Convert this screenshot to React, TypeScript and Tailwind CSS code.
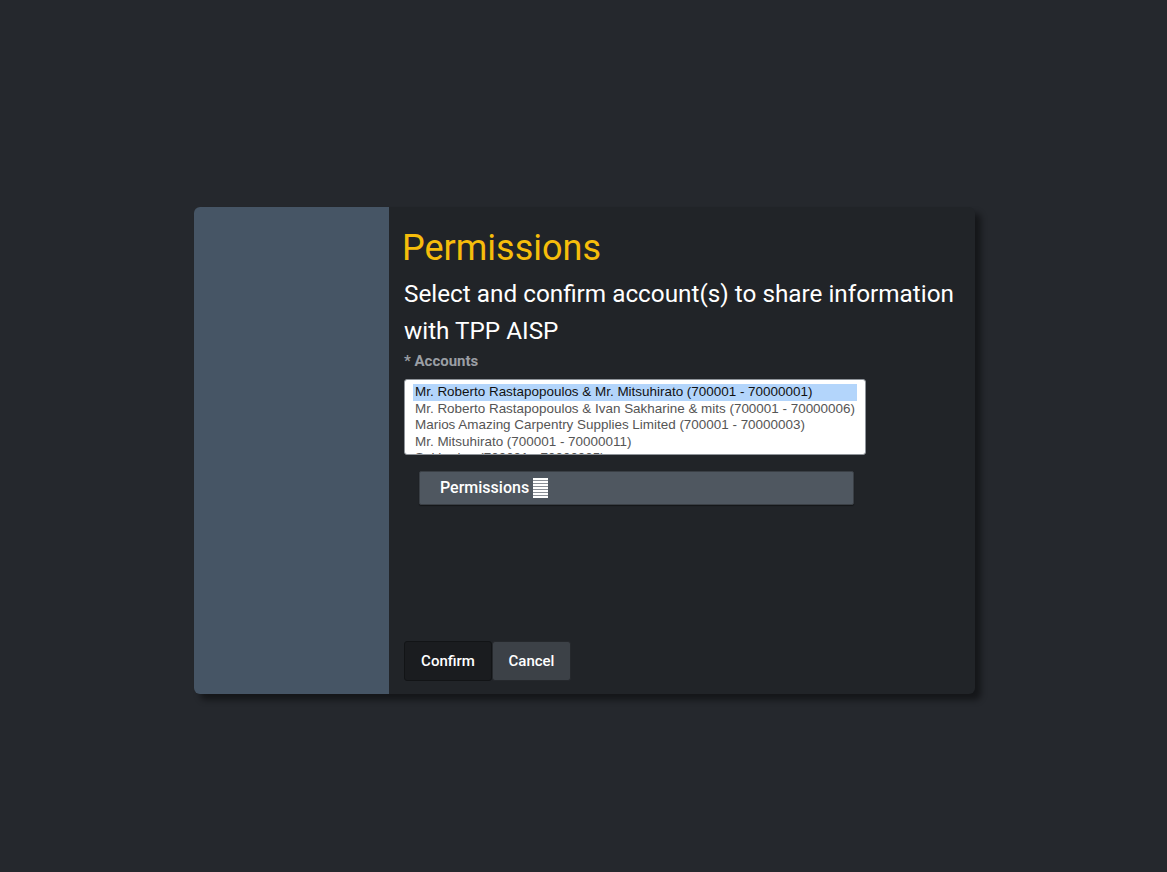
const ACCOUNTS = [
  "Mr. Roberto Rastapopoulos & Mr. Mitsuhirato (700001 - 70000001)",
  "Mr. Roberto Rastapopoulos & Ivan Sakharine & mits (700001 - 70000006)",
  "Marios Amazing Carpentry Supplies Limited (700001 - 70000003)",
  "Mr. Mitsuhirato (700001 - 70000011)",
  "Sakharine (700001 - 70000005)",
];

function ListIcon() {
  return (
    <svg width="15" height="20" viewBox="0 0 15 20" className="ml-[4px] inline-block">
      <rect x="0" y="0" width="15" height="20" fill="#ffffff" />
      {[2, 5, 8, 11, 14, 17].map((y) => (
        <rect key={y} x="0" y={y} width="15" height="1" fill="#8a8f96" />
      ))}
    </svg>
  );
}

export default function App() {
  return (
    <div className="flex min-h-screen justify-center bg-[#25282d] pl-[2px] pt-[207px] font-['Roboto',sans-serif]">
      <div className="flex h-[487px] w-[781px] overflow-hidden rounded-[6px] bg-[#212428] shadow-[6px_6px_6px_rgba(0,0,0,0.45)]">
        <div className="w-[195px] shrink-0 bg-[#465565]" />
        <div className="flex flex-1 flex-col px-[15px] pb-[13px] pt-[19px]">
          <h1 className="ml-[-2px] text-[36px] leading-[44px] text-[#f6bd0b]">Permissions</h1>
          <h2 className="mt-[5px] text-[24.3px] leading-[37px] text-white">
            Select and confirm account(s) to share information with TPP AISP
          </h2>
          <div className="mt-[3px] text-[15px] font-bold leading-[18px] text-[#9a9ea4]">* Accounts</div>
          <div className="mt-[9px] h-[76px] w-[462px] overflow-hidden rounded-[3px] border border-[#8f949a] bg-white py-[4px] pl-[8px] pr-[8px] font-['Liberation_Sans',sans-serif] text-[13.45px] leading-[16.5px]">
            {ACCOUNTS.map((a, i) => (
              <div
                key={a}
                className={
                  i === 0
                    ? "whitespace-nowrap bg-[#b3d5fb] pl-[2px] text-[#111]"
                    : "whitespace-nowrap pl-[2px] text-[#555]"
                }
              >
                {a}
              </div>
            ))}
          </div>
          <div className="ml-[15px] mt-[16px] flex h-[34px] w-[435px] items-center rounded-[2px] border border-[#3a3f45] bg-[#4f5760] pl-[20px] text-[16px] font-medium text-white shadow-[0_1px_1px_rgba(0,0,0,0.4)]">
            Permissions
            <ListIcon />
          </div>
          <div className="mt-auto flex">
            <button className="h-[40px] w-[88px] rounded-[3px] border border-[#121416] bg-[#1a1c1f] text-[15px] font-medium text-white">
              Confirm
            </button>
            <button className="h-[40px] w-[79px] rounded-[3px] border border-[#25282c] bg-[#3c4147] text-[15px] font-medium text-white">
              Cancel
            </button>
          </div>
        </div>
      </div>
    </div>
  );
}
